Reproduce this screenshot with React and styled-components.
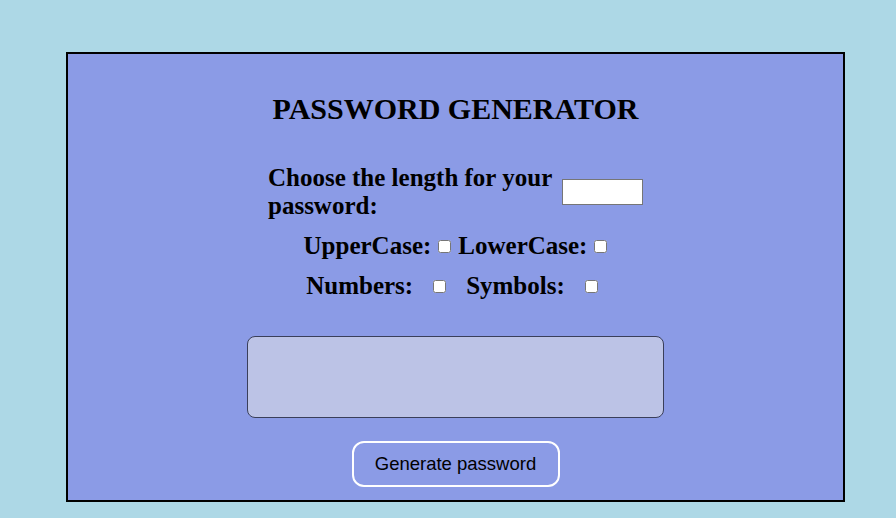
import React from 'react';
import styled, { createGlobalStyle } from 'styled-components';

const GlobalStyle = createGlobalStyle`
    html, body {
        margin: 0;
        background: #add8e6;
    }
    body {
        font-family: "Liberation Serif", "Times New Roman", serif;
    }
`

const Page = styled.div`
    width: 896px;
    height: 518px;
    padding-top: 52px;
    box-sizing: border-box;
`

const Card = styled.div`
    width: 779px;
    height: 450px;
    margin-left: 66px;
    box-sizing: border-box;
    border: 2px solid #000;
    background: #8b9be6;
    display: flex;
    flex-direction: column;
    align-items: center;
    padding-top: 36px;
`

const Title = styled.h1`
    margin: 0;
    font-size: 30px;
    font-weight: bold;
    line-height: 38px;
`

const LengthRow = styled.div`
    display: flex;
    align-items: center;
    gap: 6px;
    margin-top: 36px;
`

const Label = styled.label`
    font-size: 25px;
    font-weight: bold;
    line-height: 28px;
    width: ${p => p.$width || 'auto'};
`

const NumberInput = styled.input`
    width: 81px;
    height: 26px;
    box-sizing: border-box;
    border: 1px solid #767676;
    background: #fff;
`

const CheckRow = styled.div`
    display: flex;
    align-items: center;
    gap: ${p => p.$gap};
    margin-top: ${p => p.$top};
    margin-right: ${p => p.$right || '0'};
`

const Pair = styled.span`
    display: flex;
    align-items: center;
    gap: ${p => p.$gap};
`

const Check = styled.input.attrs({ type: 'checkbox' })`
    width: 13px;
    height: 13px;
    margin: 0;
`

const Output = styled.textarea`
    width: 417px;
    height: 82px;
    box-sizing: border-box;
    margin-top: 36px;
    border: 1px solid #3a3f5a;
    border-radius: 8px;
    background: #bcc3e6;
    resize: none;
`

const Button = styled.button`
    margin-top: 23px;
    width: 208px;
    height: 46px;
    border: 2px solid #fff;
    border-radius: 12px;
    background: transparent;
    font-family: "Liberation Sans", Arial, sans-serif;
    font-size: 18.5px;
    color: #000;
`

export default function App() {
    return (
        <Page>
            <GlobalStyle />
            <Card>
                <Title>PASSWORD GENERATOR</Title>
                <LengthRow>
                    <Label $width="288px">Choose the length for your password:</Label>
                    <NumberInput type="number" />
                </LengthRow>
                <CheckRow $gap="7px" $top="12px">
                    <Pair $gap="7px"><Label>UpperCase:</Label><Check /></Pair>
                    <Pair $gap="7px"><Label>LowerCase:</Label><Check /></Pair>
                </CheckRow>
                <CheckRow $gap="20px" $top="12px" $right="7px">
                    <Pair $gap="20px"><Label>Numbers:</Label><Check /></Pair>
                    <Pair $gap="20px"><Label>Symbols:</Label><Check /></Pair>
                </CheckRow>
                <Output readOnly />
                <Button>Generate password</Button>
            </Card>
        </Page>
    );
}
